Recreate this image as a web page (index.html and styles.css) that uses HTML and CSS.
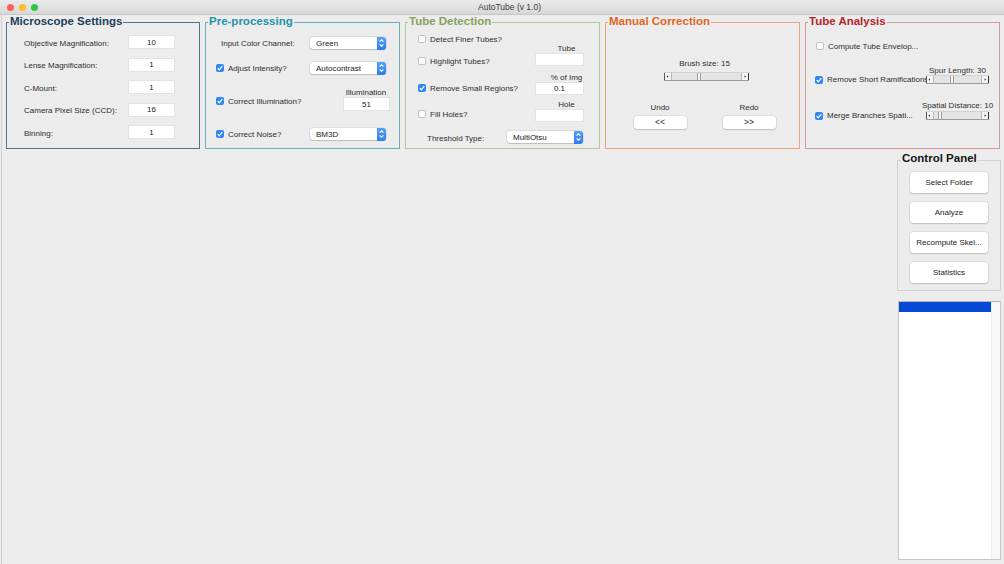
FILE: index.html
```html
<!DOCTYPE html>
<html>
<head>
<meta charset="utf-8">
<title>AutoTube (v 1.0)</title>
<link rel="stylesheet" href="styles.css">
</head>
<body>
<div class="titlebar">
  <div class="lights">
    <span class="light red"></span><span class="light yellow"></span><span class="light green"></span>
  </div>
  <div class="wintitle">AutoTube (v 1.0)</div>
  <div class="tb-spacer"></div>
</div>

<div class="winbody">
  <div class="panels">
    <!-- Microscope Settings -->
    <div class="panel p-micro">
      <div class="ptitle">Microscope Settings</div>
      <div class="ms-grid">
        <div class="ms-label">Objective Magnification:</div><div class="field">10</div>
        <div class="ms-label">Lense Magnification:</div><div class="field">1</div>
        <div class="ms-label">C-Mount:</div><div class="field">1</div>
        <div class="ms-label">Camera Pixel Size (CCD):</div><div class="field">16</div>
        <div class="ms-label">Binning:</div><div class="field">1</div>
      </div>
    </div>

    <!-- Pre-processing -->
    <div class="panel p-pre">
      <div class="ptitle">Pre-processing</div>
      <div class="pp-r1 row">
        <div class="pp-left plain">Input Color Channel:</div>
        <div class="dropdown"><span class="dd-text">Green</span><span class="dd-arrow"><svg viewBox="0 0 9 12" width="9" height="12"><path d="M2.6 4.6 L4.5 2.8 L6.4 4.6 M2.6 7.4 L4.5 9.2 L6.4 7.4" fill="none" stroke="#fff" stroke-width="1.1"/></svg></span></div>
      </div>
      <div class="pp-r2 row">
        <div class="pp-left chk-wrap"><span class="cb on"><svg viewBox="0 0 8 8" width="8" height="8"><path d="M1.7 4.1 L3.3 5.8 L6.3 2.1" fill="none" stroke="#fff" stroke-width="1.3"/></svg></span><span>Adjust Intensity?</span></div>
        <div class="dropdown"><span class="dd-text">Autocontrast</span><span class="dd-arrow"><svg viewBox="0 0 9 12" width="9" height="12"><path d="M2.6 4.6 L4.5 2.8 L6.4 4.6 M2.6 7.4 L4.5 9.2 L6.4 7.4" fill="none" stroke="#fff" stroke-width="1.1"/></svg></span></div>
      </div>
      <div class="pp-r3 row">
        <div class="pp-left3 chk-wrap"><span class="cb on"><svg viewBox="0 0 8 8" width="8" height="8"><path d="M1.7 4.1 L3.3 5.8 L6.3 2.1" fill="none" stroke="#fff" stroke-width="1.3"/></svg></span><span>Correct Illumination?</span></div>
        <div class="pp-right3">
          <div class="small-label">Illumination</div>
          <div class="field f-illum">51</div>
        </div>
      </div>
      <div class="pp-r4 row">
        <div class="pp-left chk-wrap"><span class="cb on"><svg viewBox="0 0 8 8" width="8" height="8"><path d="M1.7 4.1 L3.3 5.8 L6.3 2.1" fill="none" stroke="#fff" stroke-width="1.3"/></svg></span><span>Correct Noise?</span></div>
        <div class="dropdown"><span class="dd-text">BM3D</span><span class="dd-arrow"><svg viewBox="0 0 9 12" width="9" height="12"><path d="M2.6 4.6 L4.5 2.8 L6.4 4.6 M2.6 7.4 L4.5 9.2 L6.4 7.4" fill="none" stroke="#fff" stroke-width="1.1"/></svg></span></div>
      </div>
    </div>

    <!-- Tube Detection -->
    <div class="panel p-tube">
      <div class="ptitle">Tube Detection</div>
      <div class="td-r1 row">
        <div class="td-left chk-wrap"><span class="cb"></span><span>Detect Finer Tubes?</span></div>
      </div>
      <div class="td-r2 td-row row">
        <div class="td-left chk-wrap td-l2"><span class="cb"></span><span>Highlight Tubes?</span></div>
        <div class="td-right">
          <div class="td-label">Tube</div>
          <div class="field td-field"></div>
        </div>
      </div>
      <div class="td-r3 td-row row">
        <div class="td-left chk-wrap td-l3"><span class="cb on"><svg viewBox="0 0 8 8" width="8" height="8"><path d="M1.7 4.1 L3.3 5.8 L6.3 2.1" fill="none" stroke="#fff" stroke-width="1.3"/></svg></span><span>Remove Small Regions?</span></div>
        <div class="td-right">
          <div class="td-label clip">% of Img</div>
          <div class="field td-field">0.1</div>
        </div>
      </div>
      <div class="td-r4 td-row row">
        <div class="td-left chk-wrap td-l4"><span class="cb"></span><span>Fill Holes?</span></div>
        <div class="td-right">
          <div class="td-label">Hole</div>
          <div class="field td-field"></div>
        </div>
      </div>
      <div class="td-r5 row">
        <div class="td-thlabel">Threshold Type:</div>
        <div class="dropdown"><span class="dd-text">MultiOtsu</span><span class="dd-arrow"><svg viewBox="0 0 9 12" width="9" height="12"><path d="M2.6 4.6 L4.5 2.8 L6.4 4.6 M2.6 7.4 L4.5 9.2 L6.4 7.4" fill="none" stroke="#fff" stroke-width="1.1"/></svg></span></div>
      </div>
    </div>

    <!-- Manual Correction -->
    <div class="panel p-manual">
      <div class="ptitle">Manual Correction</div>
      <div class="mc">
        <div class="mc-brush">Brush size: 15</div>
        <div class="slider mc-slider">
          <span class="sl-btn sl-l"><svg viewBox="0 0 8 9" width="8" height="9"><path d="M2 4.5 L4 3 L4 6 Z" fill="#222"/></svg></span>
          <span class="sl-track"><span class="sl-thumb" style="left:37%"></span></span>
          <span class="sl-btn sl-r"><svg viewBox="0 0 8 9" width="8" height="9"><path d="M5.5 4.5 L3.5 3 L3.5 6 Z" fill="#222"/></svg></span>
        </div>
        <div class="mc-undo">
          <div class="mc-col">
            <div class="mc-lbl">Undo</div>
            <div class="btn mc-btn">&lt;&lt;</div>
          </div>
          <div class="mc-col">
            <div class="mc-lbl">Redo</div>
            <div class="btn mc-btn">&gt;&gt;</div>
          </div>
        </div>
      </div>
    </div>

    <!-- Tube Analysis -->
    <div class="panel p-anal">
      <div class="ptitle">Tube Analysis</div>
      <div class="ta-r1 row">
        <div class="chk-wrap ta-l1"><span class="cb"></span><span>Compute Tube Envelop...</span></div>
      </div>
      <div class="ta-r2 ta-row row">
        <div class="ta-left chk-wrap"><span class="cb on"><svg viewBox="0 0 8 8" width="8" height="8"><path d="M1.7 4.1 L3.3 5.8 L6.3 2.1" fill="none" stroke="#fff" stroke-width="1.3"/></svg></span><span class="nowrap">Remove Short Ramifications</span></div>
        <div class="ta-right">
          <div class="ta-label">Spur Length: 30</div>
          <div class="slider ta-slider">
            <span class="sl-btn sl-l"><svg viewBox="0 0 8 9" width="8" height="9"><path d="M2 4.5 L4 3 L4 6 Z" fill="#222"/></svg></span>
            <span class="sl-track"><span class="sl-thumb" style="left:33%"></span></span>
            <span class="sl-btn sl-r"><svg viewBox="0 0 8 9" width="8" height="9"><path d="M5.5 4.5 L3.5 3 L3.5 6 Z" fill="#222"/></svg></span>
          </div>
        </div>
      </div>
      <div class="ta-r3 ta-row row">
        <div class="ta-left chk-wrap"><span class="cb on"><svg viewBox="0 0 8 8" width="8" height="8"><path d="M1.7 4.1 L3.3 5.8 L6.3 2.1" fill="none" stroke="#fff" stroke-width="1.3"/></svg></span><span class="nowrap">Merge Branches Spati...</span></div>
        <div class="ta-right">
          <div class="ta-label ta-label3">Spatial Distance: 10</div>
          <div class="slider ta-slider">
            <span class="sl-btn sl-l"><svg viewBox="0 0 8 9" width="8" height="9"><path d="M2 4.5 L4 3 L4 6 Z" fill="#222"/></svg></span>
            <span class="sl-track"><span class="sl-thumb" style="left:8%"></span></span>
            <span class="sl-btn sl-r"><svg viewBox="0 0 8 9" width="8" height="9"><path d="M5.5 4.5 L3.5 3 L3.5 6 Z" fill="#222"/></svg></span>
          </div>
        </div>
      </div>
    </div>
  </div>

  <div class="side">
    <div class="cpanel">
      <div class="cptitle">Control Panel</div>
      <div class="btn cp-btn">Select Folder</div>
      <div class="btn cp-btn">Analyze</div>
      <div class="btn cp-btn">Recompute Skel...</div>
      <div class="btn cp-btn">Statistics</div>
    </div>
    <div class="listbox">
      <div class="lb-items"><div class="lb-sel"></div></div>
      <div class="lb-scroll"></div>
    </div>
  </div>
</div>
</body>
</html>
```

FILE: styles.css
```css
* { box-sizing: border-box; }
html, body { margin: 0; padding: 0; }
body {
  width: 1004px;
  height: 564px;
  overflow: hidden;
  background: #ececec;
  font-family: "Liberation Sans", Arial, sans-serif;
  font-size: 8px;
  color: #2e2e2e;
}

/* Title bar */
.titlebar {
  height: 15px;
  display: flex;
  align-items: center;
  background: linear-gradient(#ebebeb, #d7d7d7);
  border-bottom: 1px solid #c6c6c6;
}
.lights { width: 40px; display: flex; gap: 5px; padding-left: 7px; }
.light { width: 7px; height: 7px; border-radius: 50%; }
.red { background: #fc5f57; }
.yellow { background: #fdbc2e; }
.green { background: #2ac940; }
.wintitle { flex: 1; text-align: center; font-size: 8.5px; color: #3c3c3c; }
.tb-spacer { width: 25px; }

/* Window body */
.winbody {
  margin-left: 1px;
  border-left: 1px solid #cfcfcf;
  height: 549px;
  padding: 7px 3px 0 4px;
}
.panels { display: flex; gap: 5px; }
.panel {
  position: relative;
  width: 195px;
  height: 127px;
  border: 1px solid #888;
}
.p-micro { width: 194px; border-color: #52718a; }
.p-pre { border-color: #6aaebb; }
.p-tube { border-color: #b2c79a; }
.p-manual { border-color: #eba57e; }
.p-anal { border-color: #d79a9a; }

.ptitle {
  position: absolute;
  top: -8px;
  left: 2px;
  padding: 0 1px;
  background: #ececec;
  font-weight: bold;
  font-size: 11.5px;
  line-height: 13px;
  white-space: nowrap;
}
.p-micro .ptitle { color: #1c3f5c; }
.p-pre .ptitle { color: #1b95a8; }
.p-tube .ptitle { color: #86a35c; }
.p-manual .ptitle { color: #e2661f; }
.p-anal .ptitle { color: #b5262b; }

.row { display: flex; align-items: center; }
.nowrap { white-space: nowrap; }

/* generic controls */
.field {
  background: #fff;
  border: 1px solid #e3e3e3;
  text-align: center;
  font-size: 8px;
  color: #222;
  display: flex;
  align-items: center;
  justify-content: center;
}
.cb {
  flex: none;
  width: 8px;
  height: 8px;
  border-radius: 2px;
  background: #fff;
  border: 1px solid #c2c2c2;
  display: inline-flex;
}
.cb.on { background: #2f87f5; border: none; }
.cb svg { display: block; }
.chk-wrap { display: flex; align-items: center; gap: 4px; }

.dropdown {
  width: 76px;
  height: 12px;
  display: flex;
  align-items: center;
  background: #fff;
  border-radius: 3px;
  box-shadow: 0 0 0 0.5px rgba(0,0,0,0.14), 0 1px 1px rgba(0,0,0,0.14);
}
.dd-text { flex: 1; padding-left: 6px; color: #222; }
.dd-arrow {
  width: 9px;
  height: 13px;
  border-radius: 0 3px 3px 0;
  background: linear-gradient(#56a0f7, #2d7ef0);
  display: flex;
}
.dd-arrow svg { display: block; margin-top: 0.5px; }

.btn {
  background: #fff;
  border-radius: 3px;
  box-shadow: 0 0 0 0.5px rgba(0,0,0,0.12), 0 1px 1.5px rgba(0,0,0,0.14);
  display: flex;
  align-items: center;
  justify-content: center;
  color: #222;
}

.slider {
  height: 9px;
  display: flex;
  border-top: 1px solid #d2d2d2;
  border-bottom: 1px solid #9a9a9a;
  background: #e6e6e6;
}
.sl-btn { width: 8px; flex: none; background: #f5f5f5; display: flex; }
.sl-btn svg { display: block; margin-top: -1px; }
.sl-l { border-left: 1px solid #555; border-right: 1px solid #b8b8b8; }
.sl-r { border-right: 1px solid #333; border-left: 1px solid #b8b8b8; }
.sl-track { flex: 1; position: relative; background: #e4e4e4; }
.sl-thumb {
  position: absolute;
  top: 0;
  bottom: 0;
  width: 4px;
  background: #f4f4f4;
  border-left: 1px solid #9c9c9c;
  border-right: 1px solid #9c9c9c;
}

/* Microscope */
.ms-grid {
  display: grid;
  grid-template-columns: 104px 47px;
  grid-auto-rows: 14px;
  row-gap: 8.5px;
  padding: 12px 0 0 17px;
}
.ms-label { line-height: 13px; padding-top: 1.5px; white-space: nowrap; }

/* Pre-processing */
.pp-r1 { margin-top: 14px; height: 12px; }
.pp-left { width: 104px; }
.pp-left.plain { padding-left: 15px; }
.pp-left.chk-wrap { padding-left: 10px; }
.pp-r2 { margin-top: 13px; height: 12px; }
.pp-r3 { margin-top: 14px; height: 23px; align-items: stretch; }
.pp-left3 { width: 136px; padding-left: 10px; padding-top: 3px; }
.pp-right3 { width: 48px; display: flex; flex-direction: column; }
.small-label { height: 9px; line-height: 9px; text-align: center; }
.f-illum { height: 14px; width: 47px; margin-left: 1px; }
.pp-r4 { margin-top: 17px; height: 12px; }

/* Tube detection */
.td-left { width: 129px; padding-left: 12px; white-space: nowrap; }
.td-r1 { margin-top: 12px; height: 8px; }
.td-row { height: 22px; align-items: stretch; }
.td-r2 { margin-top: 1px; }
.td-r3 { margin-top: 7px; }
.td-r4 { margin-top: 5px; }
.td-l2 { padding-top: 12px; }
.td-l3 { padding-top: 8px; }
.td-l4 { padding-top: 6px; }
.td-right { width: 49px; display: flex; flex-direction: column; }
.td-label { height: 9px; line-height: 9px; text-align: center; padding-left: 14px; white-space: nowrap; }
.td-label.clip { overflow: hidden; height: 8.5px; }
.td-field { height: 13px; }
.td-r5 { margin-top: 9px; height: 12px; }
.td-thlabel { width: 101px; padding-left: 21px; padding-top: 3px; }

/* Manual correction */
.mc { display: flex; flex-direction: column; align-items: center; }
.mc-brush { margin-top: 36px; height: 9px; line-height: 9px; padding-left: 4px; }
.mc-slider { margin-top: 4px; width: 85px; margin-left: 7px; }
.mc-undo { display: flex; gap: 36px; margin-top: 22px; margin-left: 4px; }
.mc-col { display: flex; flex-direction: column; align-items: center; }
.mc-lbl { height: 9px; line-height: 9px; margin-bottom: 3.5px; }
.mc-btn { width: 53px; height: 13px; font-size: 8.5px; }

/* Tube analysis */
.ta-r1 { margin-top: 19px; height: 8px; }
.ta-l1 { padding-left: 10px; white-space: nowrap; }
.ta-row { align-items: stretch; }
.ta-r2 { margin-top: 16px; height: 18px; }
.ta-r3 { margin-top: 17px; height: 19px; }
.ta-left { width: 120px; padding-left: 9px; align-self: flex-end; height: 9px; }
.ta-right { width: 63px; display: flex; flex-direction: column; justify-content: flex-end; align-items: center; }
.ta-label { height: 9px; line-height: 9px; white-space: nowrap; text-align: center; }
.ta-label3 { margin-bottom: 1px; }
.ta-slider { width: 63px; }

/* Side column */
.side { width: 104px; margin-left: auto; margin-top: 11px; }
.cpanel {
  position: relative;
  height: 131px;
  border: 1px solid #d2d2d2;
  padding: 11px 0 0 12px;
  display: flex;
  flex-direction: column;
  gap: 9px;
}
.cptitle {
  position: absolute;
  top: -9px;
  left: 3px;
  padding: 0 1px;
  background: #ececec;
  font-weight: bold;
  font-size: 11.5px;
  line-height: 13px;
  color: #161616;
  white-space: nowrap;
}
.cp-btn { width: 78px; height: 21px; flex: none; }

.listbox {
  margin-top: 10px;
  margin-left: 1px;
  width: 103px;
  height: 259px;
  border: 1px solid #c6c6c6;
  border-top-color: #b4b4b4;
  background: #fff;
  display: flex;
}
.lb-items { flex: 1; }
.lb-sel { height: 10px; background: #0649d6; }
.lb-scroll { width: 9px; background: #f8f8f8; border-left: 1px solid #ededed; }
```
